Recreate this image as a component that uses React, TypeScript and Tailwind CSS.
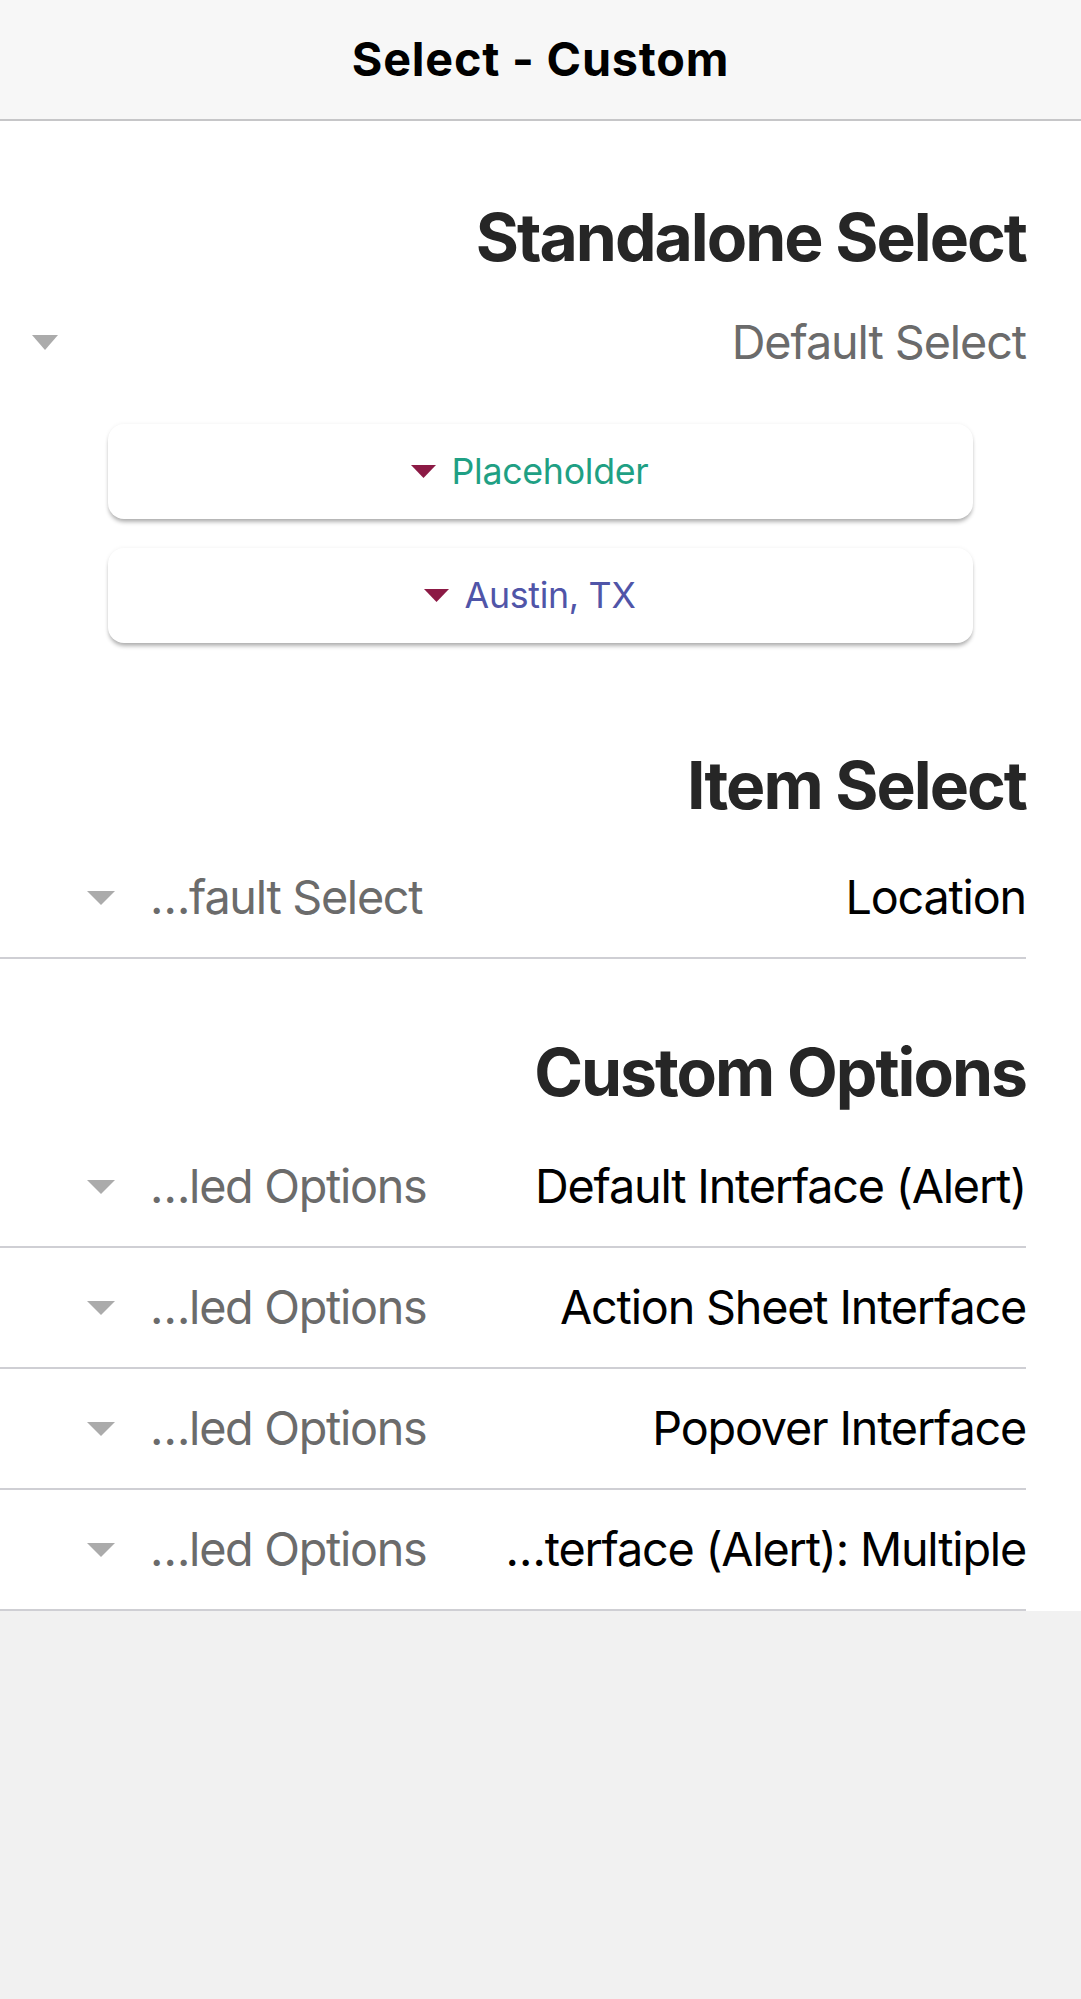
import React from "react";

const Caret = ({ color, w = 27, h = 14 }: { color: string; w?: number; h?: number }) => (
  <svg width={w} height={h} viewBox={`0 0 ${w} ${h}`} className="shrink-0">
    <polygon points={`0,0 ${w},0 ${w / 2},${h}`} fill={color} />
  </svg>
);

function SectionTitle({ children, className = "" }: { children: React.ReactNode; className?: string }) {
  return (
    <h2
      className={`pr-[55px] text-right text-[66px] font-bold leading-[80px] tracking-[-2px] text-[#262626] ${className}`}
    >
      {children}
    </h2>
  );
}

function ItemRow({ label, value }: { label: string; value: string }) {
  return (
    <div className="w-[1026px]">
      <div className="flex h-[121px] items-center border-b-2 border-[#cfcfd4]">
        <div className="flex w-[440px] shrink-0 items-center gap-[35px] pl-[87px]">
          <Caret color="#ababab" w={28} h={14} />
          <span className="whitespace-nowrap text-[46.75px] tracking-[-1.3px] text-[#6b6b6b]">{value}</span>
        </div>
        <span className="flex-1 truncate text-right text-[46.75px] tracking-[-1.2px] text-black">{label}</span>
      </div>
    </div>
  );
}

function CustomSelect({ text, color }: { text: string; color: string }) {
  return (
    <div className="mx-[108px] flex h-[95px] items-center justify-center gap-[16px] rounded-[16px] bg-white pr-[22px] shadow-[0_4px_4px_-1px_rgba(0,0,0,0.3),0_0_4px_rgba(0,0,0,0.06)]">
      <Caret color="#8c1a45" w={25} h={13} />
      <span className="text-[35.75px] tracking-[-0.3px]" style={{ color }}>
        {text}
      </span>
    </div>
  );
}

export default function App() {
  return (
    <div className="min-h-[1999px] w-[1081px] bg-[#f1f1f1] font-['Inter','Noto_Sans',sans-serif]">
      <header className="flex h-[121px] items-center justify-center border-b-2 border-[#c6c6c8] bg-[#f7f7f7]">
        <h1 className="text-[46.75px] font-bold tracking-[0.8px] text-black">Select - Custom</h1>
      </header>

      <main className="bg-white">
        <SectionTitle className="pt-[76px]">Standalone Select</SectionTitle>

        <div className="mt-[5px] flex h-[121px] items-center justify-between pl-[32px] pr-[55px]">
          <Caret color="#ababab" w={26} h={15} />
          <span className="text-[46.75px] tracking-[-1.1px] text-[#6b6b6b]">Default Select</span>
        </div>

        <div className="mt-[21px] flex flex-col gap-[29px]">
          <CustomSelect text="Placeholder" color="#1fa084" />
          <CustomSelect text="Austin, TX" color="#5055a8" />
        </div>

        <SectionTitle className="mt-[102px]">Item Select</SectionTitle>
        <div className="mt-[13px]">
          <ItemRow label="Location" value="…fault Select" />
        </div>

        <SectionTitle className="mt-[73px]">Custom Options</SectionTitle>
        <div className="mt-[15px]">
          <ItemRow label="Default Interface (Alert)" value="…led Options" />
          <ItemRow label="Action Sheet Interface" value="…led Options" />
          <ItemRow label="Popover Interface" value="…led Options" />
          <ItemRow label="…terface (Alert): Multiple" value="…led Options" />
        </div>
      </main>
    </div>
  );
}
